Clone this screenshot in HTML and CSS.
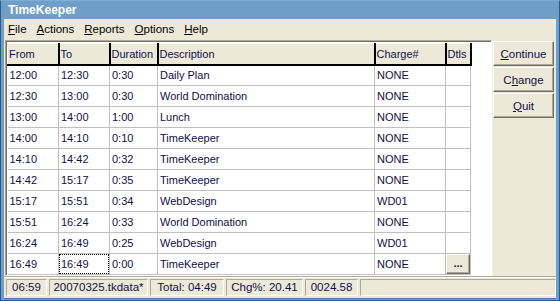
FILE: index.html
```html
<!DOCTYPE html>
<html>
<head>
<meta charset="utf-8">
<link rel="stylesheet" href="styles.css">
</head>
<body>
<div class="window">
  <div class="titlebar">TimeKeeper</div>
  <div class="client">
    <div class="menubar">
      <span class="menu"><u>F</u>ile</span>
      <span class="menu"><u>A</u>ctions</span>
      <span class="menu"><u>R</u>eports</span>
      <span class="menu"><u>O</u>ptions</span>
      <span class="menu"><u>H</u>elp</span>
    </div>
    <div class="main">
      <div class="gridwrap">
        <table class="grid">
          <colgroup>
            <col class="c-from"><col class="c-to"><col class="c-dur"><col class="c-desc"><col class="c-chg"><col class="c-dtl">
          </colgroup>
          <thead>
            <tr><th>From</th><th>To</th><th>Duration</th><th>Description</th><th>Charge#</th><th>Dtls</th></tr>
          </thead>
          <tbody>
            <tr><td>12:00</td><td>12:30</td><td>0:30</td><td>Daily Plan</td><td>NONE</td><td></td></tr>
            <tr><td>12:30</td><td>13:00</td><td>0:30</td><td>World Domination</td><td>NONE</td><td></td></tr>
            <tr><td>13:00</td><td>14:00</td><td>1:00</td><td>Lunch</td><td>NONE</td><td></td></tr>
            <tr><td>14:00</td><td>14:10</td><td>0:10</td><td>TimeKeeper</td><td>NONE</td><td></td></tr>
            <tr><td>14:10</td><td>14:42</td><td>0:32</td><td>TimeKeeper</td><td>NONE</td><td></td></tr>
            <tr><td>14:42</td><td>15:17</td><td>0:35</td><td>TimeKeeper</td><td>NONE</td><td></td></tr>
            <tr><td>15:17</td><td>15:51</td><td>0:34</td><td>WebDesign</td><td>WD01</td><td></td></tr>
            <tr><td>15:51</td><td>16:24</td><td>0:33</td><td>World Domination</td><td>NONE</td><td></td></tr>
            <tr><td>16:24</td><td>16:49</td><td>0:25</td><td>WebDesign</td><td>WD01</td><td></td></tr>
            <tr><td>16:49</td><td class="focus"><span class="focusbox">16:49</span></td><td>0:00</td><td>TimeKeeper</td><td>NONE</td><td class="dtlcell"><span class="dots">...</span></td></tr>
          </tbody>
        </table>
      </div>
      <div class="buttons">
        <div class="btn"><u>C</u>ontinue</div>
        <div class="btn">C<u>h</u>ange</div>
        <div class="btn"><u>Q</u>uit</div>
      </div>
    </div>
    <div class="statusbar">
      <div class="panel p1">06:59</div>
      <div class="panel p2">20070325.tkdata*</div>
      <div class="panel p3">Total: 04:49</div>
      <div class="panel p4">Chg%: 20.41</div>
      <div class="panel p5">0024.58</div>
      <div class="panel p6"></div>
    </div>
  </div>
</div>
</body>
</html>
```

FILE: styles.css
```css
html, body {
  margin: 0;
  padding: 0;
}
body {
  width: 560px;
  height: 301px;
  overflow: hidden;
  font-family: "Liberation Sans", Arial, sans-serif;
  font-size: 11px;
  color: #000;
}
.window {
  width: 560px;
  height: 301px;
  box-sizing: border-box;
  background: #6e9fc8;
  border: 1px solid #2b5b8c;
  border-top-color: #7faed4;
  display: flex;
  flex-direction: column;
}
.titlebar {
  height: 18px;
  line-height: 18px;
  padding-left: 7px;
  color: #fff;
  font-weight: bold;
  font-size: 12px;
  flex: none;
}
.client {
  margin: 0 3px 3px 3px;
  background: #ece9d8;
  flex: 1;
  display: flex;
  flex-direction: column;
  border-bottom: 1px solid #4d7db0;
}
.menubar {
  height: 19px;
  display: flex;
  align-items: center;
  padding-left: 4px;
  flex: none;
}
.menu {
  margin-right: 10px;
  font-family: "Liberation Sans", Arial, sans-serif;
  font-size: 11.5px;
}
.main {
  flex: 1;
  display: flex;
  padding: 2px 0 0 1px;
}
.gridwrap {
  width: 487px;
  height: 236px;
  box-sizing: border-box;
  background: #fff;
  border-top: 1px solid #aca899;
  border-left: 1px solid #aca899;
  border-right: 1px solid #fff;
  border-bottom: 1px solid #fff;
  box-shadow: inset 1px 1px 0 #716f64, 1px 1px 0 #f1efe2;
  padding: 2px 0 0 1px;
  overflow: hidden;
}
.grid {
  border-collapse: collapse;
  table-layout: fixed;
  width: 462px;
  color: #10104a;
}
.c-from { width: 51px; }
.c-to { width: 51px; }
.c-dur { width: 48px; }
.c-desc { width: 217px; }
.c-chg { width: 71px; }
.c-dtl { width: 25px; }
.grid th {
  height: 21px;
  padding: 0 0 0 1px;
  box-sizing: border-box;
  text-align: left;
  font-weight: normal;
  background: #ece9d8;
  color: #10104a;
  border-top: 1px solid #fff;
  border-left: 1px solid #fff;
  border-right: 2px solid #000;
  border-bottom: 2px solid #000;
  white-space: nowrap;
  overflow: hidden;
}
.grid td {
  height: 21px;
  box-sizing: border-box;
  padding: 0 0 0 2px;
  border-right: 1px solid #c0c0c0;
  border-bottom: 1px solid #c0c0c0;
  white-space: nowrap;
  overflow: hidden;
}
.grid td.focus {
  padding: 0;
}
.focusbox {
  display: block;
  height: 20px;
  line-height: 18px;
  box-sizing: border-box;
  padding-left: 1px;
  border: 1px dotted #000;
}
.grid td.dtlcell {
  padding: 0;
}
.dots {
  display: block;
  height: 20px;
  box-sizing: border-box;
  background: #ece9d8;
  border-top: 1px solid #fff;
  border-left: 1px solid #fff;
  border-right: 1px solid #716f64;
  border-bottom: 1px solid #716f64;
  box-shadow: inset -1px -1px 0 #aca899;
  text-align: center;
  line-height: 16px;
  font-weight: bold;
  color: #10104a;
}
.buttons {
  display: flex;
  flex-direction: column;
  gap: 1px;
  margin-left: 1px;
  margin-top: 1px;
}
.btn {
  width: 61px;
  height: 25px;
  box-sizing: border-box;
  background: #ece9d8;
  border-top: 1px solid #fff;
  border-left: 1px solid #fff;
  border-right: 1px solid #716f64;
  border-bottom: 1px solid #716f64;
  box-shadow: inset -1px -1px 0 #aca899;
  display: flex;
  align-items: center;
  justify-content: center;
  font-size: 11.5px;
  color: #10104a;
}
.statusbar {
  height: 19px;
  flex: none;
  display: flex;
  gap: 2px;
  padding: 2px 0 0 2px;
  border-top: 1px solid #aca899;
  box-shadow: inset 0 1px 0 #fff;
}
.panel {
  height: 17px;
  box-sizing: border-box;
  border-top: 1px solid #aca899;
  border-left: 1px solid #aca899;
  border-right: 1px solid #fff;
  border-bottom: 1px solid #fff;
  line-height: 15px;
  text-align: center;
  font-size: 11.5px;
  color: #10104a;
}
.p1 { width: 41px; }
.p2 { width: 99px; }
.p3 { width: 74px; }
.p4 { width: 77px; }
.p5 { width: 53px; }
.p6 { flex: 1; }
```
